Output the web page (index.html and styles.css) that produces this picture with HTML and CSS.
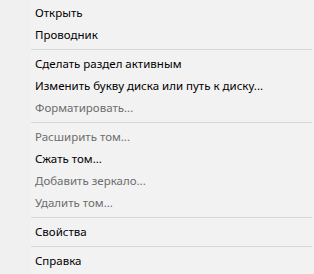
FILE: index.html
```html
<!DOCTYPE html>
<html lang="ru">
<head>
<meta charset="utf-8">
<link rel="stylesheet" href="styles.css">
</head>
<body>
<div class="menu">
  <div class="item">Открыть</div>
  <div class="item">Проводник</div>
  <div class="sep"></div>
  <div class="item">Сделать раздел активным</div>
  <div class="item">Изменить букву диска или путь к диску...</div>
  <div class="item disabled">Форматировать...</div>
  <div class="sep"></div>
  <div class="item disabled">Расширить том...</div>
  <div class="item">Сжать том...</div>
  <div class="item disabled">Добавить зеркало...</div>
  <div class="item disabled">Удалить том...</div>
  <div class="sep"></div>
  <div class="item">Свойства</div>
  <div class="sep"></div>
  <div class="item">Справка</div>
</div>
</body>
</html>
```
FILE: styles.css
```css
html, body {
  margin: 0;
  padding: 0;
  background: #f2f2f2;
}
.menu {
  width: 314px;
  height: 274px;
  box-sizing: border-box;
  padding-top: 2px;
  display: flex;
  flex-direction: column;
  background: linear-gradient(to right, #f0f0f0 0, #f0f0f0 31px, #f2f2f2 31px);
  font-family: "Noto Sans", "Open Sans", sans-serif;
  font-size: 11.5px;
  color: #000;
}
.item {
  height: 22px;
  line-height: 22px;
  padding-left: 35px;
  white-space: nowrap;
}
.item.disabled {
  color: #6d6d6d;
}
.sep {
  height: 7px;
  display: flex;
  flex-direction: column;
  padding: 3px 2px 0 31px;
  box-sizing: border-box;
}
.sep::before {
  content: "";
  display: block;
  height: 1px;
  background: #d7d7d7;
}
```
